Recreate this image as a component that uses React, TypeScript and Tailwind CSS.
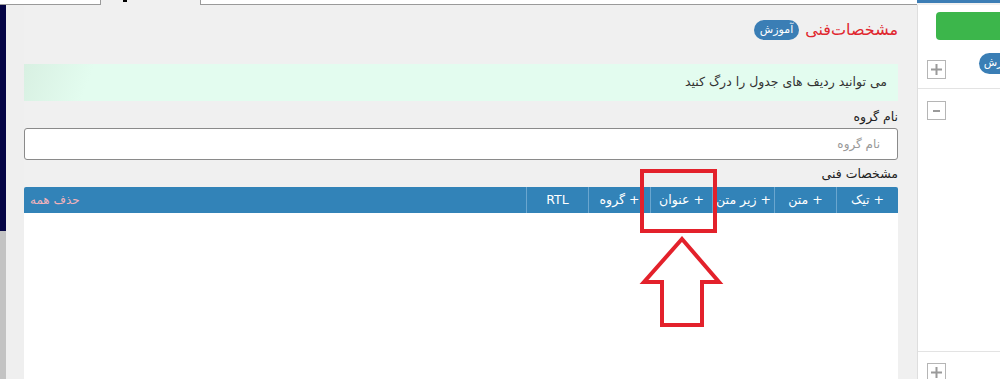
import React from "react";

const cols = ["+ تیک", "+ متن", "+ زیر متن", "+ عنوان", "+ گروه", "RTL"];

function SquareBtn({ sign }: { sign: "+" | "-" }) {
  return (
    <div className="w-[19px] h-[19px] border border-[#b5b5b5] bg-white flex items-center justify-center">
      {sign === "+" ? (
        <svg width="13" height="13" viewBox="0 0 13 13">
          <path d="M6.5 1v11M1 6.5h11" stroke="#9a9a9a" strokeWidth="2" />
        </svg>
      ) : (
        <svg width="13" height="13" viewBox="0 0 13 13">
          <path d="M3 7h7" stroke="#9a9a9a" strokeWidth="2" />
        </svg>
      )}
    </div>
  );
}

export default function App() {
  return (
    <div
      className="w-[1000px] h-[379px] overflow-hidden bg-[#f0f0f0] flex flex-col relative"
      style={{ fontFamily: '"DejaVu Sans", Tahoma, sans-serif' }}
    >
      {/* tab strip */}
      <div className="flex h-[5px] shrink-0">
        <div className="w-[101px] bg-white border-b border-r border-[#9a9a9a]" />
        <div className="w-[99px] bg-[#f0f0f0] relative">
          <div className="absolute left-[22px] top-0 w-[4px] h-[2px] bg-black" />
        </div>
        <div className="w-[717px] bg-white border-b border-l border-[#9a9a9a]" />
        <div className="flex-1 bg-[#3c7db5] h-[3px]" />
      </div>

      <div className="flex flex-1 min-h-0">
        {/* left edge */}
        <div className="w-[6px] flex flex-col">
          <div className="h-[226px] bg-[#050545]" />
          <div className="flex-1 bg-[#c3c3c3]" />
        </div>
        <div className="w-[18px] bg-[#efefef]" />

        {/* main */}
        <div dir="rtl" className="w-[874px] flex flex-col text-[#333]">
          <div className="flex items-center gap-[6px] h-[50px]">
            <span className="text-[16px] text-[#e0262e]">مشخصات‌فنی</span>
            <span className="bg-[#3a7eb5] text-white text-[11px] rounded-full px-[6px] h-[20px] flex items-center">
              آموزش
            </span>
          </div>

          <div className="mt-[9px] h-[37px] bg-[linear-gradient(110deg,#d8f0e2_0%,#e3fcef_8%,#e3fcef_100%)] flex items-center pr-[11px] text-[12.5px] text-[#333]">
            می توانید ردیف های جدول را درگ کنید
          </div>

          <div className="mt-[7px] text-[12.5px] h-[18px] leading-[18px] text-[#222]">نام گروه</div>
          <div className="mt-[2px] h-[32px] bg-white border border-[#8a8a8a] rounded-[3px] flex items-center pr-[17px] text-[12px] text-[#999]">
            نام گروه
          </div>

          <div className="mt-[5px] text-[12.5px] h-[18px] leading-[18px] text-[#222]">مشخصات فنی</div>

          <div className="mt-[4px] h-[26px] bg-[#3283b8] rounded-t-[2px] flex text-white text-[12.5px]">
            {cols.map((c) => (
              <div
                key={c}
                className="w-[62px] flex items-center justify-center border-l border-[#6aa6cf]"
              >
                {c}
              </div>
            ))}
            <div className="flex-1 flex items-center justify-end pl-[6px] text-[#f3b3bb] text-[12px]">
              حذف همه
            </div>
          </div>
          <div className="flex-1 bg-white" />
        </div>

        <div className="w-[19px]" />

        {/* right panel */}
        <div className="flex-1 bg-white border-l border-[#dedede] flex flex-col overflow-hidden">
          <div className="ml-[18px] mt-[7px] w-[80px] h-[28px] bg-[#3cb64b] rounded-[4px] shrink-0" />
          <div className="flex items-start h-[49px] shrink-0 border-b border-[#e3e3e3]">
            <div className="ml-[9px] mt-[20px] shrink-0">
              <SquareBtn sign="+" />
            </div>
            <div className="ml-[33px] mt-[13px] shrink-0 bg-[#3a7eb5] text-white text-[11px] rounded-full h-[21px] w-[44px] flex items-center pr-[6px] justify-end" dir="ltr">
              <span dir="rtl">آموزش</span>
            </div>
          </div>
          <div className="ml-[9px] mt-[12px]">
            <SquareBtn sign="-" />
          </div>
          <div className="flex-1" />
          <div className="h-[28px] border-t border-[#e3e3e3] pl-[9px] pt-[11px] shrink-0">
            <SquareBtn sign="+" />
          </div>
        </div>
      </div>

      {/* annotation: highlight box and arrow */}
      <div className="absolute left-[640px] top-[169px] w-[77px] h-[64px] border-[4px] border-[#e3212b]" />
      <svg className="absolute left-[638px] top-[236px]" width="88" height="95" viewBox="0 0 88 95">
        <path
          d="M44 3 L81 46 L64 46 L64 89 L24 89 L24 46 L6 46 Z"
          fill="white"
          stroke="#e3212b"
          strokeWidth="4"
          strokeLinejoin="miter"
        />
      </svg>
    </div>
  );
}
